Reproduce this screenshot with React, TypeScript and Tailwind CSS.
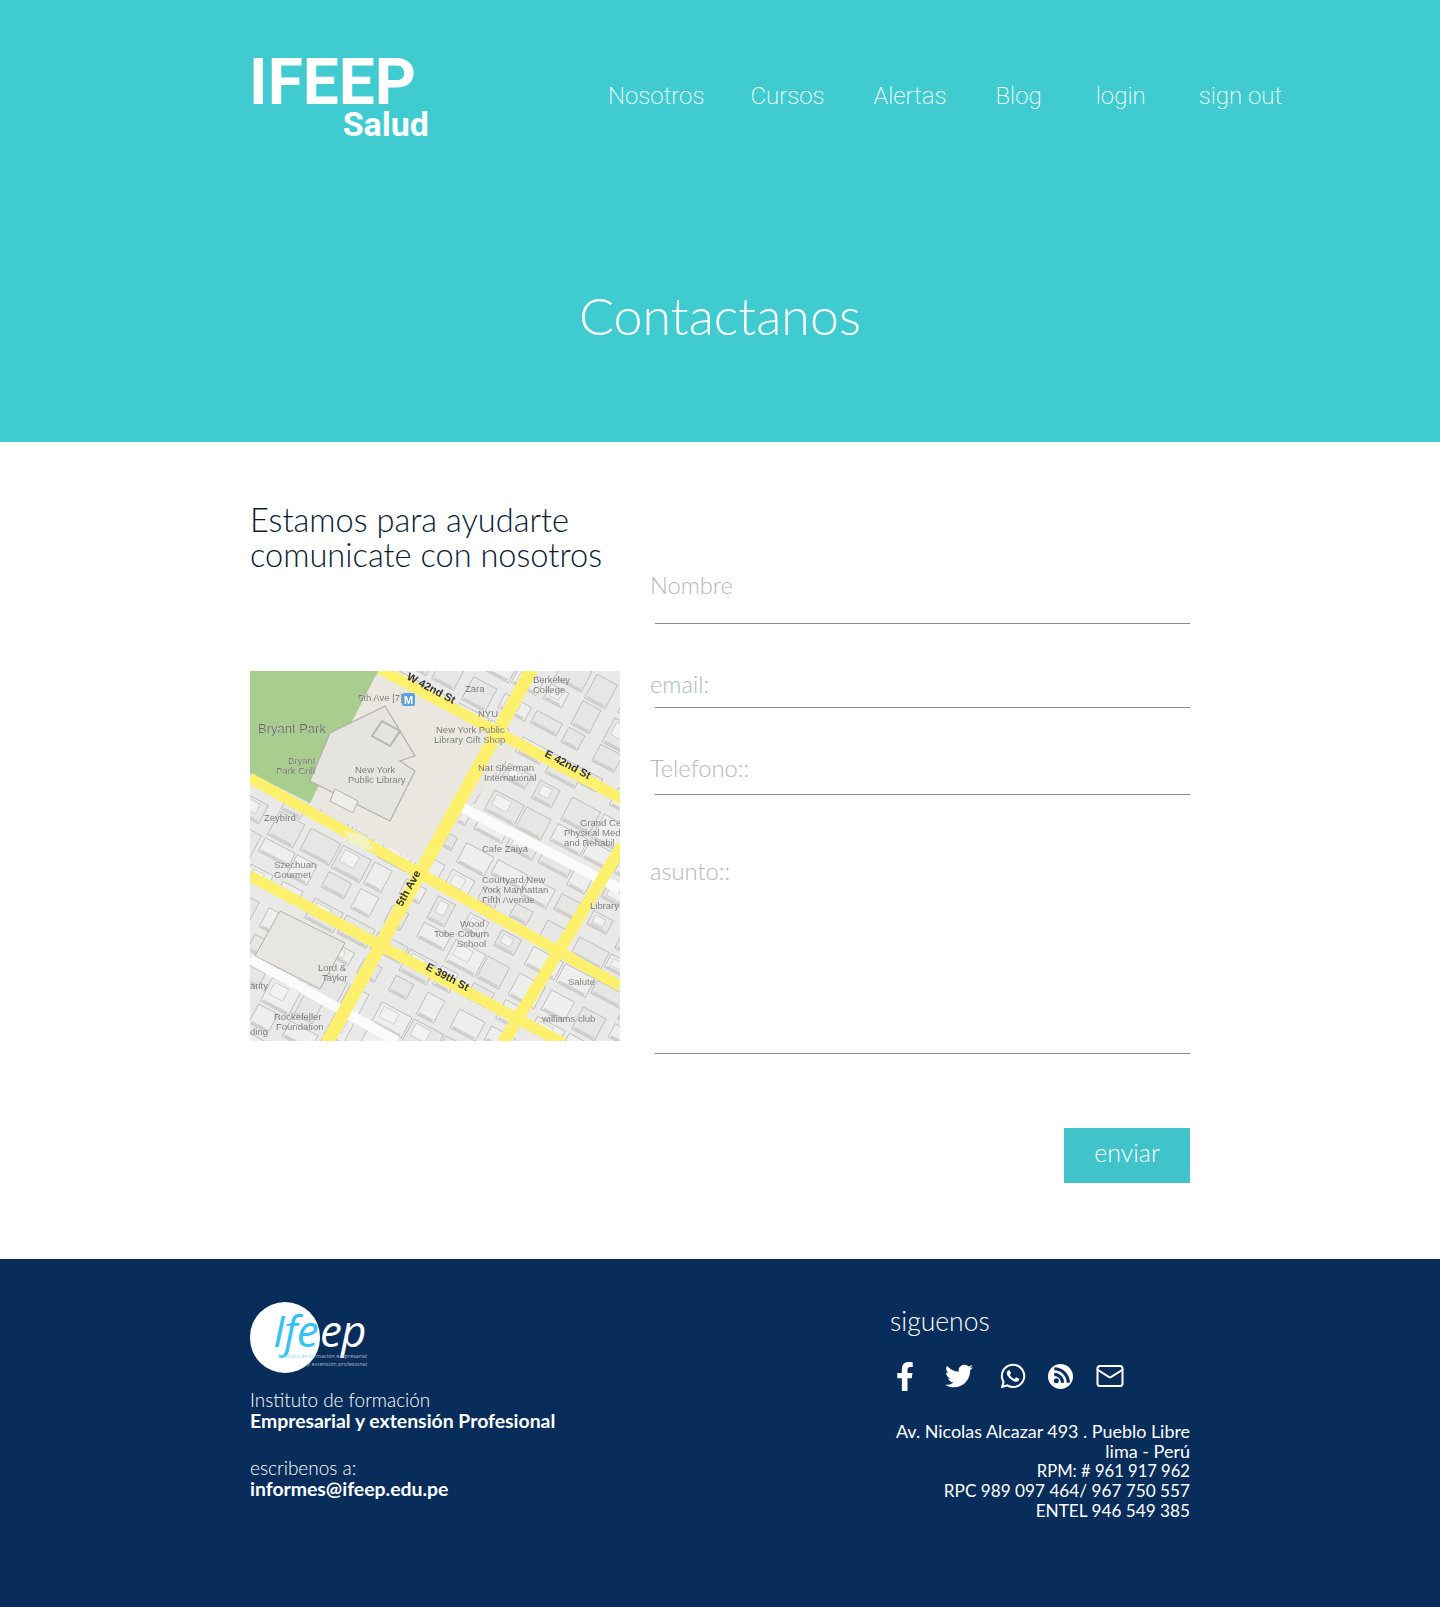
import React from "react";
import { FaFacebookF, FaTwitter, FaWhatsapp } from "react-icons/fa";
import { Mail } from "lucide-react";

const road = "#fdf06c";

function Blocks() {
  const cells: React.ReactNode[] = [];
  let seed = 7;
  const rnd = () => {
    seed = (seed * 9301 + 49297) % 233280;
    return seed / 233280;
  };
  for (let gx = -160; gx < 520; gx += 36) {
    for (let gy = -220; gy < 400; gy += 30) {
      const w = 18 + rnd() * 16;
      const h = 14 + rnd() * 14;
      const tone = rnd() > 0.5 ? "#eeeeec" : "#e6e6e4";
      cells.push(
        <g key={`${gx}-${gy}`}>
          <rect x={gx} y={gy} width={w} height={h} fill={tone} stroke="#b8b8b6" strokeWidth="0.8" />
          <rect x={gx + 2} y={gy + h - 3} width={w - 4} height="3" fill="#d0d0ce" />
          {rnd() > 0.6 && <rect x={gx + 4} y={gy + 3} width={w / 2} height={h / 2} fill="#f2f2f0" stroke="#c0c0be" strokeWidth="0.6" />}
        </g>
      );
    }
  }
  return <g transform="rotate(28)">{cells}</g>;
}

function MapPicture() {
  const labels: [string, number, number][] = [
    ["Bryant Park", 8, 62], ["Bryant", 38, 93], ["Park Grill", 26, 103], ["New York", 105, 102], ["Public Library", 98, 112],
    ["5th Ave [7]", 108, 30], ["Zara", 215, 21], ["NYU", 228, 46], ["New York Public", 186, 62], ["Library Gift Shop", 184, 72],
    ["Nat Sherman", 228, 100], ["International", 234, 110], ["Berkeley", 283, 12], ["College", 283, 22], ["Grand Cer", 330, 155],
    ["Physical Med", 314, 165], ["and Rehabil", 314, 175], ["Zeybird", 14, 150], ["Cafe Zaiya", 232, 181], ["Szechuan", 24, 197],
    ["Gourmet", 24, 207], ["Courtyard New", 232, 212], ["York Manhattan", 232, 222], ["Fifth Avenue", 232, 232], ["Library", 340, 238],
    ["Wood", 210, 256], ["Tobe-Coburn", 184, 266], ["School", 207, 276], ["Lord &", 68, 300], ["Taylor", 72, 310], ["Salute", 318, 314],
    ["williams club", 292, 351], ["Rockefeller", 24, 349], ["Foundation", 26, 359], ["arity", 0, 318], ["ding", 0, 364],
  ];
  return (
    <svg viewBox="0 0 370 370" className="w-[370px] h-[370px] block shrink-0 blur-[0.3px]" style={{ fontFamily: "'Liberation Sans', sans-serif" }}>
      <rect width="370" height="370" fill="#e9e9e7" />
      <Blocks />
      <polygon points="130,0 270,72 172,195 58,130" fill="#e9e7e0" />
      <polygon points="0,0 128,0 60,132 0,102" fill="#a9cd8f" />
      <polygon points="80,62 135,35 165,85 150,90 165,100 140,150 60,110" fill="#e6e4de" stroke="#b0b0ae" strokeWidth="1.2" />
      <polygon points="132,50 150,60 140,75 122,65" fill="none" stroke="#b5b5b3" strokeWidth="2" />
      <polygon points="85,118 108,130 103,142 80,130" fill="#eeeeea" stroke="#b0b0ae" />
      <polygon points="30,240 95,272 70,318 5,285" fill="#e8e6e0" stroke="#b0b0ae" />
      <line x1="213" y1="137" x2="370" y2="218" stroke="#fbfbfb" strokeWidth="10" />
      <line x1="0" y1="288" x2="147" y2="370" stroke="#fbfbfb" strokeWidth="10" />
      <line x1="130" y1="-2" x2="372" y2="128" stroke={road} strokeWidth="11" />
      <line x1="0" y1="107" x2="370" y2="315" stroke={road} strokeWidth="11" />
      <line x1="0" y1="205" x2="313" y2="372" stroke={road} strokeWidth="11" />
      <line x1="282" y1="-2" x2="77" y2="372" stroke={road} strokeWidth="13" />
      <line x1="372" y1="175" x2="253" y2="372" stroke={road} strokeWidth="12" />
      <polygon points="95,160 115,165 125,180 100,172" fill="#f2f2c5" />
      <rect x="152" y="22" width="13" height="13" rx="2" fill="#5aa4dc" />
      <text x="154" y="33" fontSize="11" fontWeight="700" fill="#fff">M</text>
      {labels.map(([t, x, y]) => (
        <text key={t} x={x} y={y} fontSize={t === "Bryant Park" ? 13 : 9.5} fill="#666" stroke="#f4f4f2" strokeWidth="0.1">{t}</text>
      ))}
      <g fontSize="11" fontWeight="700" fill="#333">
        <text transform="translate(156 8) rotate(28)">W 42nd St</text>
        <text transform="translate(294 85) rotate(28)">E 42nd St</text>
        <text transform="translate(152 236) rotate(-61)">5th Ave</text>
        <text transform="translate(175 298) rotate(28)">E 39th St</text>
      </g>
    </svg>
  );
}

function RssCircle() {
  return (
    <svg viewBox="0 0 24 24" className="w-[25px] h-[25px]">
      <circle cx="12" cy="12" r="12" fill="#fff" />
      <path d="M6 4.5c7.5 0 13.5 6 13.5 13.5" fill="none" stroke="#082d5a" strokeWidth="3" />
      <path d="M6 10c4.4 0 8 3.6 8 8" fill="none" stroke="#082d5a" strokeWidth="3" />
      <circle cx="8" cy="16" r="2.4" fill="#082d5a" />
    </svg>
  );
}

const raleway = "font-['Lato','Open_Sans',sans-serif]";

export default function App() {
  return (
    <div className={`w-full h-[1607px] bg-white overflow-hidden ${raleway}`}>
      <header className="h-[442px] bg-[#40cbd1] text-white">
        <div className="w-[940px] mx-auto pt-[48px] flex items-start font-['Roboto',sans-serif]">
          <div className="w-[179px] shrink-0 font-bold">
            <div className="text-[64px] leading-[70px] tracking-[0px] -ml-[1px]">IFEEP</div>
            <div className="text-[34px] leading-[30px] text-right -mt-[9px]">Salud</div>
          </div>
          <nav className="flex items-center ml-[179px] mt-[28px] text-[24px] leading-[40px] font-extralight whitespace-nowrap">
            <a>Nosotros</a>
            <a className="ml-[46px]">Cursos</a>
            <a className="ml-[49px]">Alertas</a>
            <a className="ml-[49px]">Blog</a>
            <a className="ml-[54px]">login</a>
            <a className="ml-[53px]">sign out</a>
          </nav>
        </div>
        <h1 className="mt-[146px] text-center text-[52px] leading-[60px] font-light">Contactanos</h1>
      </header>

      <main className="w-[940px] mx-auto h-[817px]">
        <div className="flex">
          <div className="w-[370px] shrink-0 pt-[60px]">
            <h2 className="text-[32.6px] leading-[35px] text-[#0b1a33] whitespace-nowrap font-light">
              Estamos para ayudarte
              <br />
              comunicate con nosotros
            </h2>
            <div className="mt-[99px]">
              <MapPicture />
            </div>
          </div>
          <form className="ml-[35px] flex-1 text-[23.7px] font-light">
            <div className="h-[182px] pt-[127px] border-b border-[#8a8a8a]">
              <input placeholder="Nombre" className="block w-full -ml-[5px] h-[34px] outline-none placeholder:text-[#b4b6c2]" />
            </div>
            <div className="h-[84px] pt-[44px] border-b border-[#8a8a8a]">
              <input placeholder="email:" className="block w-full -ml-[5px] h-[34px] outline-none placeholder:text-[#b4b6c2]" />
            </div>
            <div className="h-[87px] pt-[44px] border-b border-[#8a8a8a]">
              <input placeholder="Telefono::" className="block w-full -ml-[5px] h-[34px] outline-none placeholder:text-[#b4b6c2]" />
            </div>
            <div className="h-[259px] pt-[59px] border-b border-[#8a8a8a]">
              <textarea placeholder="asunto::" className="block w-full -ml-[5px] h-[190px] resize-none outline-none placeholder:text-[#b4b6c2]" />
            </div>
            <div className="flex justify-end mt-[74px]">
              <button type="button" className="w-[126px] h-[55px] pb-[5px] bg-[#40c3c9] text-white text-[25px] font-light">enviar</button>
            </div>
          </form>
        </div>
      </main>

      <footer className="h-[348px] bg-[#082d5a] text-white">
        <div className="w-[940px] mx-auto flex justify-between pt-[43px]">
          <div>
            <div className="relative w-[120px] h-[71px]">
              <div className="absolute left-0 top-0 w-[70px] h-[71px] rounded-full bg-white" />
              <span className="absolute left-[23px] top-[-6px] text-[44px] leading-[68px] italic font-['Open_Sans',sans-serif] text-[#35c3f5] tracking-[-1px]">Ife</span>
              <span className="absolute left-[70px] top-[-6px] text-[44px] leading-[68px] italic font-['Open_Sans',sans-serif] text-white tracking-[-1px]">ep</span>
              <div className="absolute right-[3px] top-[50px] text-right text-[5.5px] leading-[8px] font-['Open_Sans',sans-serif] whitespace-nowrap">
                <span className="text-[#8fdcf5]">Instituto de for</span><span className="text-[#aeb9c8]">mación empresarial</span>
                <br />
                <span className="text-[#aeb9c8]">y extensión profesional</span>
              </div>
            </div>
            <p className="mt-[17px] text-[18.9px] leading-[20px] font-light">Instituto de formación</p>
            <p className="text-[19.4px] leading-[22px] font-bold whitespace-nowrap">Empresarial y extensión Profesional</p>
            <p className="mt-[26px] text-[19px] leading-[20px] font-light">escribenos a:</p>
            <p className="text-[19.4px] leading-[22px] font-bold">informes@ifeep.edu.pe</p>
          </div>
          <div className="w-[300px] flex flex-col">
            <p className="mt-[3px] text-[26.5px] leading-[32px] font-light">siguenos</p>
            <div className="flex items-center h-[30px] mt-[24px] pl-[6px]">
              <FaFacebookF className="w-[18px] h-[29px]" />
              <FaTwitter className="w-[28px] h-[28px] ml-[31px]" />
              <FaWhatsapp className="w-[28px] h-[28px] ml-[26px]" />
              <div className="ml-[21px]"><RssCircle /></div>
              <Mail className="w-[30px] h-[30px] ml-[22px]" strokeWidth={1.6} />
            </div>
            <address className="mt-[30px] not-italic text-right leading-[20px]">
              <div className="text-[17.9px] whitespace-nowrap">Av. Nicolas Alcazar 493 . Pueblo Libre</div>
              <div className="text-[18px]">lima - Perú</div>
              <div className="text-[16.6px]">RPM: # 961 917 962</div>
              <div className="text-[17.2px] whitespace-nowrap">RPC 989 097 464/ 967 750 557</div>
              <div className="text-[17.2px]">ENTEL 946 549 385</div>
            </address>
          </div>
        </div>
      </footer>
    </div>
  );
}
